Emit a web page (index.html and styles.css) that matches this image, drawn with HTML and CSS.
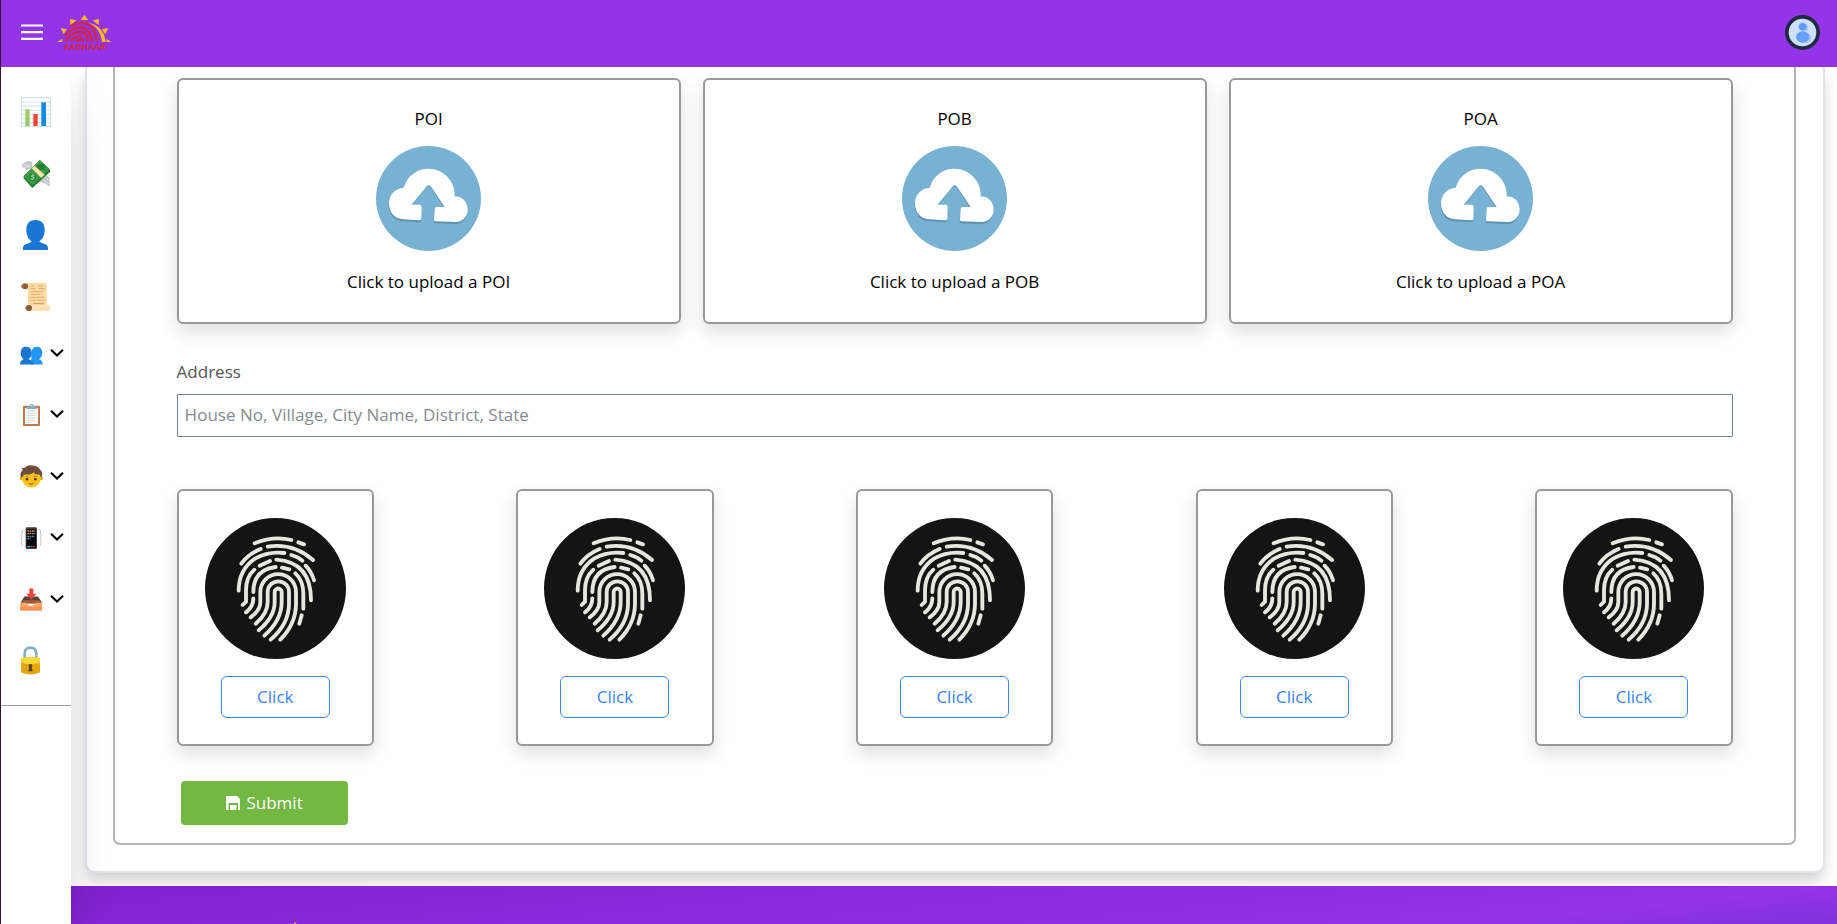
FILE: index.html
```
<!DOCTYPE html>
<html lang="en">
<head>
<meta charset="utf-8">
<title>Aadhaar</title>
<link rel="stylesheet" href="styles.css">
</head>
<body>
<svg class="defs" width="0" height="0">
  <symbol id="chev" viewBox="0 0 14 10"><path d="M1 1.8 7 7.6 13 1.8" fill="none" stroke="#000" stroke-width="2.1"/></symbol>
  <symbol id="cloud" viewBox="18 18 315 315">
    <circle cx="175.500" cy="175.500" r="157.500" fill="#78b2d3"/>
    <path transform="translate(-1 4)" fill="#5f93b0" d="M148 243 L100 240 C72 239 57 215 57 190 C57 162 78 144 101 143 C112 108 140 86 175 86 C222 86 257 125 254 170 C278 168 293 188 293 210 C293 232 276 249 258 249 L197 246 Q192 246 192 241 L194 208 Q194 201 200 201 H224 L183 139 Q176 130 169 139 L125 195 H150 Q155 196 155 203 L154 238 Q153 244 148 243Z"/>
    <path fill="#fff" d="M148 241 L100 238 C72 237 57 215 57 190 C57 162 78 144 101 143 C112 108 140 86 175 86 C222 86 257 125 254 170 C278 168 293 188 293 210 C293 230 276 246 258 246 L197 244 Q192 244 192 239 L194 208 Q194 201 200 201 H224 L183 140 Q176 131 169 140 L125 194 H150 Q155 195 155 202 L154 236 Q153 241 148 241Z"/>
  </symbol>
  <symbol id="finger" viewBox="105 113 423 423">
    <circle cx="316.500" cy="324.500" r="211.500" fill="#141414"/>
    <g fill="none" stroke="#e7e7e0" stroke-width="11.500" stroke-linecap="round">
      <path d="M254 189Q310 166 364 179M385 186 402 192M214 250Q235 221 272 206M293 199Q370 187 429 239"/>
      <path d="M206 331Q206 268 255 235Q295 212 343 218M364 224Q385 230 397 241M269 256 300 242M319 238Q423 245 423 360M407 256Q425 275 432 300"/>
      <path d="M218 374 228 364V330Q228 290 253 268M250 335Q250 268 317 260M336 262 358 267M376 279Q400 300 400 340V385M395 405 388 430M228 396Q250 380 250 354"/>
      <path d="M242 411Q271 390 271 365V335A53.500 53.500 0 0 1 378 335V370Q378 430 331 478"/>
      <path d="M257 430Q293 400 293 365V335A32 32 0 0 1 357 335V370Q357 430 302 478"/>
      <path d="M266 450Q314 410 314 365V335A10.500 10.500 0 0 1 335 335V365Q335 420 283 466"/>
    </g>
  </symbol>
</svg>

<header class="topbar">
  <svg class="burger" width="22" height="18" viewBox="0 0 22 18"><path d="M0 2.500H22M0 9.200H22M0 15.800H22" stroke="#fff" stroke-width="2.200"/></svg>
  <svg class="logo" width="55" height="38" viewBox="171 42 165 114">
    <g fill="#fdb913">
      <path d="M242 60 253 44 265 60ZM210 57 229 61 211 76ZM297 57 278 61 296 76ZM182 84 201 88 191 103ZM325 84 306 88 316 103ZM172 126 187 116V126ZM334 126 319 116V126Z"/>
      <path d="M262 68C296 72 315 96 317 126H306C304 98 288 76 262 68Z"/>
    </g>
    <g fill="none" stroke="#d2283c" stroke-width="7">
      <path d="M211 79Q238 63 263 72Q288 84 290 125M197 106Q212 84 240 82Q272 86 277 125M196 124Q212 96 244 95Q261 99 264 125M212 125Q226 106 246 108M229 125Q238 114 249 120L251 125"/>
    </g>
    <text x="191" y="150" textLength="127" lengthAdjust="spacingAndGlyphs" class="logo-text">AADHAAR</text>
  </svg>
  <svg class="avatar" width="35" height="35" viewBox="0 0 105 105">
    <circle cx="52.500" cy="52.500" r="47" fill="#cfe0ff" stroke="#1f2940" stroke-width="11"/>
    <ellipse cx="58" cy="39" rx="12" ry="11" fill="#a9c8fb"/><ellipse cx="60" cy="69" rx="19" ry="16" fill="#a9c8fb"/>
    <ellipse cx="53" cy="35" rx="12" ry="11" fill="#629bfb"/><ellipse cx="53" cy="66" rx="20" ry="17" fill="#66a0fb"/>
  </svg>
</header>

<div class="body">
  <nav class="sidebar">
    <div class="item"><svg width="30" height="30" viewBox="63 51 90 90"><path d="M64 53H151V140H64Z" fill="#fcfdfd" stroke="#c6d2d8" stroke-width="2.500"/><path d="M64 66H151M64 78H151M64 91H151M64 103H151M64 116H151M64 128H151" stroke="#c6d2d8" stroke-width="2"/><path d="M76 88H89V138H76Z" fill="#9ccc65"/><path d="M100 102H113V138H100Z" fill="#f44336"/><path d="M124 67H138V138H124Z" fill="#0b8bea"/></svg></div>
    <div class="item"><svg width="30" height="30" viewBox="63 234 90 90"><path d="M63 252 82 240 97 242 96 262 80 267 68 259ZM119 289 130 278 148 289 150 317 136 308 121 303Z" fill="#c4c6c8"/><path d="M66 252 90 253M70 259 90 257M132 285 145 297M127 295 148 309" stroke="#eee" stroke-width="2"/><path d="M120 238 150 266V273L97 321 71 292V285Z" fill="#1f7a2e"/><path d="M119 237 149 264 98 313 71 287Z" fill="#3a9a45"/><ellipse cx="122" cy="258" rx="13" ry="10" fill="#267f34"/><path d="M95 262 104 254 134 281 124 291Z" fill="#fbe3a4"/><ellipse cx="98" cy="289" rx="10" ry="11" fill="#247d31"/><path d="M103 283Q94 279 95 287Q104 287 102 293Q98 298 92 293" stroke="#d9ead5" stroke-width="3" fill="none"/></svg></div>
    <div class="item"><svg width="30" height="30" viewBox="63 420 90 90"><path d="M106 420C126 420 134 433 134 450C134 468 125 480 118 484C121 491 143 490 144 503V510H69V503C70 490 92 491 95 484C87 480 79 467 79 450C79 433 87 420 106 420Z" fill="#1976d2"/></svg></div>
    <div class="item"><svg width="30" height="30" viewBox="63 606 90 90"><path d="M74 611Q80 608 88 609H133Q141 611 140 620V676H84V630Q79 627 74 628Z" fill="#ffd9a0"/><path d="M78 676H148Q153 684 148 693H80Z" fill="#ffe0b2"/><path d="M100 671H132" stroke="#a87942" stroke-width="2"/><path d="M92 618H104M112 618H131M92 626H107M115 626H134M92 635H130M92 643H120M92 652H133M92 661H106M113 661H134" stroke="#c89c65" stroke-width="2"/><circle cx="75" cy="619" r="9" fill="#8d5a34"/><path d="M64 616H72V623H64ZM76 680H86V688H76Z" fill="#a56a3c"/><circle cx="87" cy="684" r="9" fill="#8d5a34"/></svg></div>
    <div class="group">
      <div class="item sm"><svg width="24" height="24" viewBox="60 46.500 72 72"><path d="M111 64C122 64 127 73 127 82C127 92 122 98 117 101Q128 104 128 117H94V80Q97 64 111 64Z" fill="#2196f3"/><path d="M78 64C91 64 95 73 95 82C95 93 90 98 85 101Q101 104 101 117H60Q60 105 71 101Q62 95 62 82C62 72 67 64 78 64Z" fill="#1976d2"/></svg><svg class="chev" width="14" height="10"><use href="#chev"/></svg></div>
      <div class="item sm"><svg width="24" height="24" viewBox="60 231 72 72"><rect x="69" y="242" width="51" height="61" rx="3" fill="#bf7a48"/><path d="M75 249H114V297H75Z" fill="#fafafa"/><path d="M80 258H109M80 265H109M80 272H109M80 279H109M80 286H102M80 292H92" stroke="#c3ccd0" stroke-width="2"/><path d="M79 252V247Q84 244 88 243Q89 237 95 237Q101 237 102 243Q107 244 110 247V252Z" fill="#82aebf"/><circle cx="95" cy="242" r="2" fill="#fff"/></svg><svg class="chev" width="14" height="10"><use href="#chev"/></svg></div>
      <div class="item sm"><svg width="24" height="24" viewBox="60 415.500 72 72"><circle cx="66" cy="458" r="6" fill="#e59600"/><circle cx="122" cy="458" r="6" fill="#e59600"/><circle cx="94" cy="457" r="29" fill="#fcc21b"/><path d="M63 455Q58 440 68 434L65 427Q72 429 75 426Q84 418 97 420Q113 420 120 432Q130 440 125 457L117 446Q107 450 101 441Q91 450 76 446Q69 449 67 455Z" fill="#6d4c41"/><circle cx="81" cy="461" r="4" fill="#543930"/><circle cx="106" cy="461" r="4" fill="#543930"/><path d="M77 453Q81 450 85 453M102 453Q106 450 110 453" stroke="#6d4c41" stroke-width="2" fill="none"/><path d="M85 472Q94 477 102 472Q94 484 85 472Z" fill="#99482c"/></svg><svg class="chev" width="14" height="10"><use href="#chev"/></svg></div>
      <div class="item sm"><svg width="24" height="24" viewBox="60 75 72 72"><rect x="77" y="82" width="34" height="65" rx="4" fill="#3f4043"/><path d="M80 88H108V144H80Z" fill="#050505"/><path d="M82 93H106M82 101H106" stroke="#ef9345" stroke-width="4" stroke-dasharray="5 2"/><path d="M82 109H104M82 116H92" stroke="#3e9edb" stroke-width="4" stroke-dasharray="5 2"/><path d="M82 140H91" stroke="#29b6f6" stroke-width="4"/><path d="M92 140H106" stroke="#e63c40" stroke-width="4" stroke-dasharray="5 2"/><path d="M70 88Q64 92 67 99Q61 103 67 109Q61 115 67 121Q60 127 68 137M118 88Q124 92 121 99Q127 103 121 109Q127 115 121 121Q128 127 120 137" fill="none" stroke="#b5c0c5" stroke-width="3"/></svg><svg class="chev" width="14" height="10"><use href="#chev"/></svg></div>
      <div class="item sm"><svg width="24" height="24" viewBox="60 259.500 72 72"><path d="M73 288H114L126 307H62Z" fill="#5d4037"/><path d="M70 299H118L124 310H65Z" fill="#a1603c"/><path d="M61 307H79Q81 316 94 316Q106 316 108 307H126V330H61Z" fill="#ffa768"/><path d="M61 318H126V330H61Z" fill="#f49350"/><path d="M88 264H100V280H109L94 298 79 280H88Z" fill="#f44336"/></svg><svg class="chev" width="14" height="10"><use href="#chev"/></svg></div>
      <div class="item sm"><svg width="22" height="30" viewBox="60 435 66 90"><path d="M74 478V460Q75 443 91 443Q108 443 109 460V478" fill="none" stroke="#84aec1" stroke-width="8"/><path d="M64 475Q92 468 120 475V517Q92 530 63 517Z" fill="#e2a610"/><path d="M64 475Q92 468 120 475V488Q92 496 64 488Z" fill="#fdd835"/><path d="M91 491A7 7 0 0 1 95 503L98 514H84L88 503A7 7 0 0 1 91 491Z" fill="#5d4524"/></svg></div>
    </div>
    <div class="rule"></div>
  </nav>

  <div class="page">
    <main class="card">
      <form class="panel">
        <div class="uploads">
          <div class="upload"><span>POI</span><svg width="105" height="105"><use href="#cloud"/></svg><span>Click to upload a POI</span></div>
          <div class="upload"><span>POB</span><svg width="105" height="105"><use href="#cloud"/></svg><span>Click to upload a POB</span></div>
          <div class="upload"><span>POA</span><svg width="105" height="105"><use href="#cloud"/></svg><span>Click to upload a POA</span></div>
        </div>
        <label class="label" for="addr">Address</label>
        <input class="field" id="addr" type="text" placeholder="House No, Village, City Name, District, State">
        <div class="prints">
          <div class="print"><svg width="141" height="141"><use href="#finger"/></svg><button type="button" class="click">Click</button></div>
          <div class="print"><svg width="141" height="141"><use href="#finger"/></svg><button type="button" class="click">Click</button></div>
          <div class="print"><svg width="141" height="141"><use href="#finger"/></svg><button type="button" class="click">Click</button></div>
          <div class="print"><svg width="141" height="141"><use href="#finger"/></svg><button type="button" class="click">Click</button></div>
          <div class="print"><svg width="141" height="141"><use href="#finger"/></svg><button type="button" class="click">Click</button></div>
        </div>
        <button type="button" class="submit"><svg width="14" height="14" viewBox="0 0 14 14"><path d="M0 0H11L14 3V14H12V7H2.500V14H0Z" fill="#fff"/><path d="M4 9H10.500V14H4Z" fill="#fff"/></svg>Submit</button>
      </form>
    </main>
    <footer class="footer"><svg width="8" height="6" viewBox="0 0 8 6"><path d="M4 0 8 6H0Z" fill="#fdb913"/></svg></footer>
  </div>
</div>
</body>
</html>
```

FILE: styles.css
```
* { box-sizing: border-box; }
html { height: 100%; overflow: hidden; }
body {
  margin: 0;
  height: 924px;
  overflow: hidden;
  display: flex;
  flex-direction: column;
  border-left: 1px solid #3d1029;
  background: #fff;
  color: #000;
  font: 17px/26px "Open Sans", "Noto Sans", sans-serif;
}
svg { display: block; flex: none; }
.defs { position: absolute; }

.topbar {
  flex: none;
  height: 67px;
  padding: 0 17px 0 20px;
  display: flex;
  align-items: center;
  background: #9333ea;
  position: relative;
  z-index: 3;
}
.burger { margin-top: -3px; }
.logo { margin-left: 14px; margin-top: -1px; }
.logo-text { font: bold 25px "Open Sans", sans-serif; fill: #d2283c; }
.avatar { margin-left: auto; margin-top: -2px; }

.body { flex: 1; display: flex; min-height: 0; overflow: hidden; }

.sidebar {
  flex: none;
  width: 70px;
  padding-top: 14.250px;
  background: #fff;
  position: relative;
  z-index: 2;
  box-shadow: 0 25px 50px -12px rgba(0, 0, 0, .25);
}
.item { height: 61.500px; padding-left: 20px; display: flex; align-items: center; }
.item.sm { padding-left: 19px; }
.group { margin-top: -5.500px; }
.chev { margin-left: 6px; }
.rule { margin-top: 14px; height: 1px; background: #9c9ca6; }

.page { flex: 1; min-width: 0; display: flex; flex-direction: column; }
.card {
  flex: none;
  height: 806px;
  margin: 0 12px 0 14px;
  padding: 0 27px 26px 26px;
  border: 2px solid #e2e2ea;
  border-top: 0;
  border-radius: 0 0 10px 10px;
  background: #fff;
  box-shadow: 0 9px 15px -2px rgba(0, 0, 0, .2);
}
.panel {
  height: 778px;
  padding: 11px 61.400px 0 61.600px;
  border: 2px solid #b5b5b5;
  border-top: 0;
  border-radius: 0 0 7px 7px;
}
.uploads { display: grid; grid-template-columns: repeat(3, 1fr); gap: 22px; }
.upload, .print {
  display: flex;
  flex-direction: column;
  align-items: center;
  background: #fff;
  border: 2px solid #999;
  border-radius: 6px;
  box-shadow: 0 8px 18px rgba(0, 0, 0, .13);
}
.upload { height: 246px; padding-top: 26px; }
.upload svg { margin: 14px 0 18px; }
.label { display: block; margin-top: 35px; color: #555; }
.field {
  display: block;
  width: 100%;
  height: 43px;
  margin-top: 9px;
  padding: 0 7px 2px;
  border: 1px solid #708090;
  border-radius: 1px;
  outline: 0;
  font: inherit;
}
.field::placeholder { color: #868b92; opacity: 1; letter-spacing: .03px; }
.prints { display: flex; justify-content: space-between; margin-top: 52px; }
.print { width: 197.400px; height: 257px; padding-top: 27px; }
.click {
  width: 109px;
  height: 42px;
  margin-top: 17px;
  padding: 0;
  background: #fff;
  border: 1px solid #3b82f6;
  border-radius: 6px;
  color: #3b82f6;
  font: inherit;
}
.submit {
  display: flex;
  align-items: center;
  justify-content: center;
  gap: 6px;
  width: 167px;
  height: 44px;
  margin: 35px 0 0 4px;
  padding: 0 5px 0 6px;
  border: 0;
  border-radius: 4px;
  background: #72b843;
  color: #fff;
  font: inherit;
}
.footer {
  flex: none;
  height: 180px;
  margin-top: 13px;
  padding: 36px 0 0 220px;
  background: linear-gradient(to bottom right, #7e22ce, #9333ea, #3730a3);
}
```
